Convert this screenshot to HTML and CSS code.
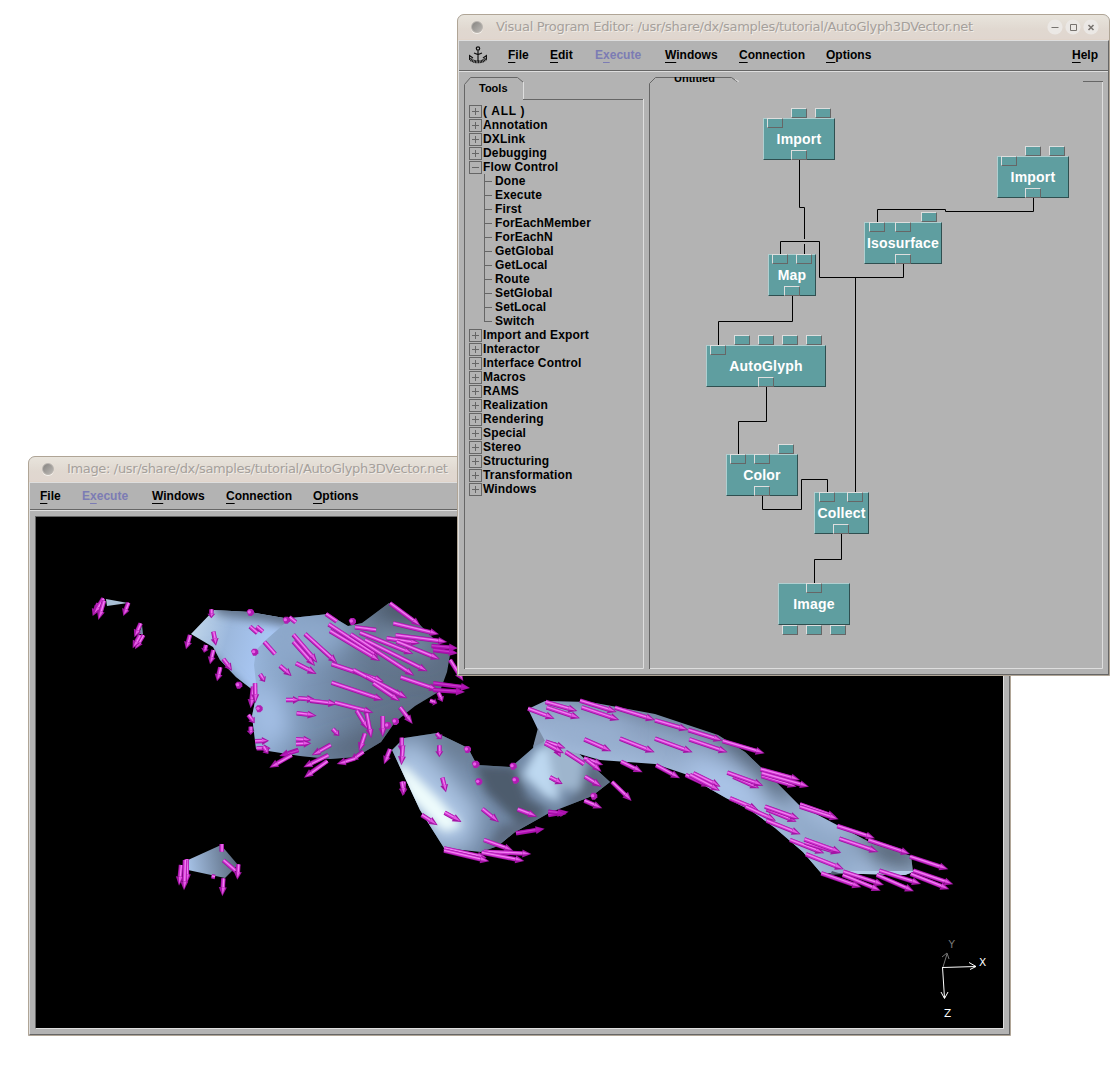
FILE: index.html
```html
<!DOCTYPE html>
<html lang="en">
<head>
<meta charset="utf-8">
<title>Visual Program Editor</title>
<link rel="stylesheet" href="styles.css">
</head>
<body>
<main class="desktop">

<section class="window window-image">
  <header class="titlebar"><i class="knob"></i><span class="title title-image">Image: /usr/share/dx/samples/tutorial/AutoGlyph3DVector.net</span></header>
  <div class="body">
    <nav class="menubar menubar-image">
      <span class="m-file"><u>F</u>ile</span><span class="m-exec off">E<u>x</u>ecute</span><span class="m-win"><u>W</u>indows</span><span class="m-conn"><u>C</u>onnection</span><span class="m-opt"><u>O</u>ptions</span>
    </nav>
    <div class="viewport">
      <svg class="scene" viewBox="36 517 967 511" width="967" height="511">
        <defs>
          <filter id="soft" x="-50%" y="-50%" width="200%" height="200%"><feGaussianBlur stdDeviation="11"/></filter>
          <filter id="soft2" x="-50%" y="-50%" width="200%" height="200%"><feGaussianBlur stdDeviation="5"/></filter>
          <linearGradient id="gTube" gradientUnits="userSpaceOnUse" x1="690" y1="705" x2="670" y2="775"><stop offset="0" stop-color="#5d6e84"/><stop offset=".5" stop-color="#8aa0bf"/><stop offset="1" stop-color="#a0b8d8"/></linearGradient>
          <linearGradient id="gMain" gradientUnits="userSpaceOnUse" x1="255" y1="670" x2="450" y2="690"><stop offset="0" stop-color="#96b3d8"/><stop offset=".3" stop-color="#7a93b3"/><stop offset=".6" stop-color="#64778f"/><stop offset="1" stop-color="#5d6d82"/></linearGradient>
          <linearGradient id="gLeft" gradientUnits="userSpaceOnUse" x1="191" y1="630" x2="262" y2="650"><stop offset="0" stop-color="#c0d6ea"/><stop offset=".5" stop-color="#9cb8dd"/><stop offset="1" stop-color="#a8c6f2"/></linearGradient>
          <linearGradient id="gIsle" gradientUnits="userSpaceOnUse" x1="188" y1="866" x2="238" y2="858"><stop offset="0" stop-color="#a6c2e6"/><stop offset="1" stop-color="#566579"/></linearGradient>
          <clipPath id="cLeft"><path d="M191 634L214 610L250 612L290 619L270 692L254 691L236 677L220 660L213 647Z"/></clipPath>
          <clipPath id="cMain"><path d="M254 665L256 650L267 639L291 618L328 614L348 626L362 623L389 603L412 617L450 655L447 672L440 691L415 706L395 722L381 742L356 757L330 759L300 756L256 749L252 716L257 692Z"/></clipPath>
          <clipPath id="cFront"><path d="M392 750L404 738L437 733L468 748L477 765L511 767L533 748L539 728L545 740L575 750L610 782L592 796L549 813L515 832L498 846L481 852L444 848L420 810Z"/></clipPath>
          <clipPath id="cTube"><path d="M528 709L545 701L590 702L655 714L718 735L745 752L772 778L799 805L837 825L873 844L911 856L913 872L905 875L821 873L803 852L775 828L750 810L726 798L712 790L685 774L655 764L600 760L545 744Z"/></clipPath>
        </defs>
        <g clip-path="url(#cLeft)"><path fill="url(#gLeft)" d="M180 600H300V700H180Z"/><g filter="url(#soft2)"><path fill="#65778f" d="M210 598L300 603L295 628L258 621L218 615Z"/><path fill="#67809c" d="M205 645L258 702L245 705L203 665Z"/></g></g>
        <g clip-path="url(#cMain)"><path fill="url(#gMain)" d="M245 595H460V770H245Z"/><g filter="url(#soft)"><path fill="#8da8cb" d="M270 620L330 610L355 635L330 655L280 665Z"/><path fill="#7a90ab" d="M375 630L430 635L430 655L380 650Z"/><path fill="#485666" d="M370 600L400 595L440 630L390 625Z"/><path fill="#a4c0e6" d="M250 690L275 690L290 730L260 750Z"/><path fill="#526174" d="M280 765L390 750L430 710L380 730L330 745Z"/></g></g>
        <g clip-path="url(#cFront)"><path fill="#7188a5" d="M380 720H620V860H380Z"/><g filter="url(#soft)"><path fill="#aac3e2" d="M385 750L415 740L450 775L480 810L470 850L430 850Z"/><path fill="#68798e" d="M415 725L470 735L480 765L450 752Z"/></g><g filter="url(#soft2)"><path fill="#eefcfc" d="M394 762L408 768L440 800L462 826L444 832L410 798Z"/><path fill="#4d5b6d" d="M474 764L515 766L527 798L550 812L520 825L486 792Z"/><path fill="#bdd8f0" d="M537 748L552 745L560 802L545 797L522 775Z"/><path fill="#9eb5cd" d="M545 735L585 755L580 790L555 790Z"/><path fill="#5b6b7e" d="M560 812L600 797L615 780L590 762L580 790Z"/><path fill="#5b6b80" d="M482 858L520 836L548 818L500 825Z"/></g></g>
        <g clip-path="url(#cTube)"><path fill="url(#gTube)" d="M520 690H920V880H520Z"/><g filter="url(#soft)"><path fill="#97afcf" d="M545 718L625 722L620 752L560 745Z"/><path fill="#aac4e8" d="M690 755L750 778L765 815L735 808L690 785Z"/><path fill="#8ca5c4" d="M760 780L800 815L860 850L850 875L810 870Z"/><path fill="#a5bfe0" d="M770 815L830 872L800 880Z"/><path fill="#455263" d="M705 722L750 742L800 795L780 800L745 765Z"/><path fill="#485666" d="M845 825L920 850L920 870L880 864Z"/></g><path fill="#b3cbe8" d="M850 871H915V875H850Z"/></g>
        <path fill="#7d8fa8" d="M538 728L533 747L545 741Z"/>
        <path fill="#4f5f70" d="M832 871L842 874L830 875Z"/>
        <path fill="url(#gIsle)" d="M188 860L221 845L238 865L225 878L188 870Z"/>
        <path fill="#a9c0d6" d="M106 599L128 603L107 606Z"/>
        <path fill="#7890a8" d="M142 625L143 634L139 634Z"/>
        <g id="arrows"></g>
        <g class="axes">
          <path class="dim" d="M943 967L947 954M942 957L947 953L949 959"/>
          <path d="M942.500 967.500L976 966.500M969 962.500L976 966.500L970 969.500M942.500 967L944.500 998M941 992L944.500 998.500L948 992"/>
          <text class="dim" x="948.500" y="948">Y</text><text x="979" y="966">X</text><text x="944" y="1017">Z</text>
        </g>
      </svg>
    </div>
  </div>
</section>

<section class="window window-editor">
  <header class="titlebar"><i class="knob"></i><span class="title title-editor">Visual Program Editor: /usr/share/dx/samples/tutorial/AutoGlyph3DVector.net</span>
    <span class="controls">
      <svg viewBox="0 0 16 16"><circle cx="8" cy="8" r="7.600"/><path d="M4.500 8.500H11.500"/></svg>
      <svg viewBox="0 0 16 16"><circle cx="8" cy="8" r="7.600"/><path d="M5.500 5.500H11.500V11.500H5.500Z"/></svg>
      <svg viewBox="0 0 16 16"><circle cx="8" cy="8" r="7.600"/><path class="thick" d="M5.500 6L10.500 11M10.500 6L5.500 11"/></svg>
    </span>
  </header>
  <div class="body">
    <nav class="menubar menubar-editor">
      <svg class="anchor" viewBox="0 0 18 18"><circle cx="9" cy="2.500" r="1.700"/><path d="M9 4.500V15M5 7L9 8.500L13 7"/><path d="M1 12.500C4 17 14 17 17 12.500" class="fluke"/><path d="M.500 13.500V9.500L4 12M17.500 13.500V9.500L14 12"/></svg>
      <span class="m-file"><u>F</u>ile</span><span class="m-edit"><u>E</u>dit</span><span class="m-exec off">E<u>x</u>ecute</span><span class="m-win"><u>W</u>indows</span><span class="m-conn"><u>C</u>onnection</span><span class="m-opt"><u>O</u>ptions</span><span class="m-help"><u>H</u>elp</span>
    </nav>
    <div class="panes">
      <aside class="tools">
        <svg class="frame" viewBox="0 0 180 592"><path class="dk" d="M.500 592V7.500L6.500 .500H53.500L59.500 5.500M59 22.500H179"/><path class="lt" d="M59.500 5V22M179.500 22V591.500H1"/></svg>
        <h2>Tools</h2>
        <ul class="tree">
          <li class="all">( ALL )</li><li>Annotation</li><li>DXLink</li><li>Debugging</li>
          <li class="open">Flow Control
            <ul><li>Done</li><li>Execute</li><li>First</li><li>ForEachMember</li><li>ForEachN</li><li>GetGlobal</li><li>GetLocal</li><li>Route</li><li>SetGlobal</li><li>SetLocal</li><li>Switch</li></ul>
          </li>
          <li>Import and Export</li><li>Interactor</li><li>Interface Control</li><li>Macros</li><li>RAMS</li><li>Realization</li><li>Rendering</li><li>Special</li><li>Stereo</li><li>Structuring</li><li>Transformation</li><li>Windows</li>
        </ul>
      </aside>
      <div class="program">
        <svg class="frame" viewBox="649 77 454 592">
          <path class="dk" d="M649.500 669V83.500L655.500 77.500H731.500L737 81.500M1083 81.500H1103"/><path class="lt" d="M735 79.500L739 81.500M1102.500 82V668.500H650"/>
          <path class="wire" d="M799.500 160V207.500H804.500V239M804.500 244V254M903.500 264V277.500H819.500V241.500H780.500V254M855.500 277V492M1033.500 198V211.500H945.500V209.500H877.500V222M792.500 296V321.500H718.500V345M766.500 387V421.500H738.500V454M762.500 496V509.500H801.500V479.500H827.500V492M841.500 534V559.500H814.500V583"/>
        </svg>
        <div class="pagetab"><span>Untitled</span></div>
        <div class="node n-import1"><div class="ports in"><i></i><i class="out"></i><i class="out"></i></div>Import<div class="ports foot"><i></i></div></div>
        <div class="node n-import2"><div class="ports in"><i></i><i class="out"></i><i class="out"></i></div>Import<div class="ports foot"><i></i></div></div>
        <div class="node n-iso"><div class="ports in"><i></i><i></i><i class="out"></i></div>Isosurface<div class="ports foot"><i></i></div></div>
        <div class="node n-map"><div class="ports in"><i></i><i></i></div>Map<div class="ports foot"><i></i></div></div>
        <div class="node n-glyph"><div class="ports in"><i></i><i class="out"></i><i class="out"></i><i class="out"></i><i class="out"></i></div>AutoGlyph<div class="ports foot"><i></i></div></div>
        <div class="node n-color"><div class="ports in"><i></i><i></i><i class="out"></i></div>Color<div class="ports foot"><i></i></div></div>
        <div class="node n-collect"><div class="ports in"><i></i><i></i></div>Collect<div class="ports foot"><i></i></div></div>
        <div class="node n-image"><div class="ports in"><i></i></div>Image<div class="ports under"><i></i><i></i><i></i></div></div>
      </div>
    </div>
  </div>
</section>
</main>
<script src="arrows.js"></script>
</body>
</html>
```
FILE: styles.css
```css
* { box-sizing: border-box; }
body { margin: 0; background: #fff; font-family: "Liberation Sans", Arial, sans-serif; }
.desktop { position: relative; width: 1114px; height: 1074px; overflow: hidden; }

/* window frames */
.window { position: absolute; display: flex; flex-direction: column; border: 1px solid #b0a596; border-radius: 7px 7px 0 0; background: #b3b3b3; overflow: hidden; }
.window-editor { left: 457px; top: 14px; width: 653px; height: 662px; }
.window-image { left: 28px; top: 456px; width: 983px; height: 580px; }
.titlebar { flex: none; height: 25px; display: flex; align-items: center; padding: 0 10px 0 13px; background: linear-gradient(#e8e4dc, #e0d8d0 60%, #e0d6cf); border-bottom: 1px solid #e0d4ca; }
.knob { width: 12px; height: 12px; border-radius: 50%; background: linear-gradient(135deg, #858380, #bcb9b5); border: 1px solid #b9b5b0; box-shadow: 0 1px #f4f1ec; }
.title { margin-left: 13px; font: 13px/24px "DejaVu Sans", sans-serif; color: #a5a09b; text-shadow: 1px 1px #f0ece7; white-space: nowrap; }
.title-editor { letter-spacing: -.31px; }
.title-image { letter-spacing: -.34px; }
.controls { display: flex; gap: 2px; margin-left: auto; }
.controls svg { width: 16px; height: 16px; fill: #ebe8e5; }
.controls path { fill: none; stroke: #77736f; }
.controls .thick { stroke-width: 1.600; }
.body { flex: 1; display: flex; flex-direction: column; min-height: 0; border: 1px solid; border-color: #dedede #666 #666 #dedede; }

/* menus */
.menubar { flex: none; display: flex; align-items: center; font-weight: 700; font-size: 12px; color: #000; border-bottom: 1px solid #666; box-shadow: 0 1px #dedede; }
.menubar-editor { height: 30px; padding: 0 0 1px 10px; }
.menubar-image { height: 27px; padding-left: 10px; }
.menubar span { flex: none; white-space: nowrap; }
.menubar u { text-decoration-thickness: 1px; text-underline-offset: 3px; text-decoration-skip-ink: none; }
.anchor { width: 18px; height: 18px; margin-right: 21px; fill: none; stroke: #111; stroke-width: 1.200; }
.anchor .fluke { stroke-width: 3px; stroke-dasharray: 1 .5; }
.m-file { width: 42px; }
.m-edit { width: 45px; }
.m-exec { width: 70px; }
.m-win { width: 74px; }
.m-conn { width: 87px; }
.m-help { margin: 0 10px 0 auto; }
.off { color: #7c7cb4; }

/* panes */
.panes { flex: 1; display: flex; gap: 5px; padding: 6px 5px 5px; min-height: 0; }
.tools { position: relative; width: 180px; }
.program { position: relative; width: 454px; }
.frame { position: absolute; inset: 0; width: 100%; height: 100%; fill: none; }
.dk { stroke: #666; }
.lt { stroke: #dedede; }
.wire { stroke: #000; }
.tools h2 { margin: 0; padding: 5px 0 0 15px; font-size: 11px; line-height: 13px; height: 27px; }
.tree, .tree ul { margin: 0; padding: 0; list-style: none; font-weight: 700; font-size: 12px; line-height: 14px; letter-spacing: .15px; }
.tree { padding-left: 19px; }
.tree > .all { letter-spacing: .7px; }
.tree > li { position: relative; }
.tree > li::before { content: ""; position: absolute; left: -14px; top: 1px; width: 11px; height: 11px; border: 1px solid #666;
  background: linear-gradient(#666, #666) center / 7px 1px no-repeat, linear-gradient(#666, #666) center / 1px 7px no-repeat; }
.tree > .open::before { background: linear-gradient(#666, #666) center / 7px 1px no-repeat; }
.tree ul { padding-left: 12px; }
.tree ul li { position: relative; }
.tree ul li::before { content: ""; position: absolute; left: -11px; top: 0; width: 1px; height: 14px; background: #666; }
.tree ul li:last-child::before { height: 8px; }
.tree ul li::after { content: ""; position: absolute; left: -11px; top: 7px; width: 8px; height: 1px; background: #666; }
.pagetab { position: relative; margin-left: 25px; height: 5px; display: flex; align-items: flex-end; overflow: hidden; font-size: 11px; font-weight: 700; line-height: 13px; }
.pagetab span { margin-bottom: -3px; }

/* program graph */
.node { position: absolute; height: 42px; width: 72px; background: #5f9ea0; border: 1px solid; border-color: #afcfd0 #2f4f50 #2f4f50 #afcfd0; color: #fff; font-weight: 700; font-size: 14px; line-height: 40px; letter-spacing: .2px; text-align: center; white-space: nowrap; }
.ports { position: absolute; left: -1px; right: -1px; display: flex; justify-content: center; gap: 8px; }
.ports i { width: 16px; height: 10px; background: #5f9ea0; border: 1px solid; border-color: #dedede #666 #666 #dedede; }
.in { top: -1px; }
.in .out { margin-top: -10px; }
.foot { bottom: -1px; }
.under { top: 41px; }
.n-import1 { left: 114px; top: 41px; }
.n-import2 { left: 348px; top: 79px; }
.n-iso { left: 215px; top: 145px; width: 78px; }
.n-iso .in { gap: 10px; }
.n-map { left: 119px; top: 177px; width: 48px; }
.n-glyph { left: 57px; top: 268px; width: 120px; }
.n-color { left: 77px; top: 377px; }
.n-collect { left: 165px; top: 415px; width: 55px; }
.n-collect .in { gap: 12px; right: 0; }
.n-collect .foot { right: 0; }
.n-image { left: 129px; top: 506px; }

/* rendered image */
.viewport { margin: 6px 5px 5px; border: 1px solid; border-color: #666 #dedede #dedede #666; background: #000; }
.scene { display: block; }
.s0 { stroke: #9c109e; stroke-width: 13.500; }
.s1 { stroke: #cc30ce; stroke-width: 10; }
.s2 { stroke: #f282f2; stroke-width: 3.800; }
.h0 { fill: #a414a6; }
.h1 { fill: #e45ae4; }
.dark .s1 { stroke: #b010b4; }
.dark .h1 { fill: #b814bc; }
.dark .s2 { stroke: #c83cca; }
.b0 { fill: #b01cb2; }
.b1 { fill: #e85ee8; }
.axes path { fill: none; stroke: #fff; }
.axes text { fill: #fff; font: 10.500px "DejaVu Sans", sans-serif; }
.axes path.dim { stroke: #777; }
.axes text.dim { fill: #777; }
```
FILE: arrows.js
```js
// Vector glyphs, grouped in patches. Coordinates inside a patch are in thirds
// of a pixel from its origin: [tail x, tail y, tip x, tip y], or [x, y] for a
// glyph that points at the viewer. Optional flags: headless, dark.
const patches = [
  { at: [80, 580], v: [[55,70,38,108],[70,55,40,104],[72,62,55,120],[145,68,130,108],[182,130,163,172],[190,165,165,208],[180,165,158,205],[330,165,318,208],[378,195,372,218],[394,88,394,115],[400,155,408,197],[400,210,390,253],[430,237,456,272],[421,262,411,304],[475,315],[510,97],[510,140,532,159,1],[530,140,548,155,1],[553,186,585,222,1],[523,216],[540,283,555,306],[519,320,512,385],[525,310,526,370],[536,386],[505,405,524,430],[512,440,512,465],[525,484,567,482],[530,505,572,505],[550,500,565,522]] },
  { at: [240, 580], v: [[258,102,290,124,1],[336,124],[345,142,408,150,1],[148,112,167,127,1],[138,120],[450,70,542,138],[440,175,540,190],[460,130,597,163],[467,166,622,186],[575,198,654,205,0,1],[580,210,654,220,0,1],[266,133,415,230],[270,153,420,243],[470,185,600,238],[360,158,520,222],[375,180,563,274],[332,163,523,287],[160,164,232,248],[160,185,225,258],[195,162,292,250],[168,250,230,282],[120,258,155,288],[275,252,432,305],[340,270,490,350],[380,290,502,355],[400,310,480,364],[275,308,430,360],[482,292,595,330],[580,310,690,324,0,1],[580,330,675,336,0,1],[630,240,670,303],[595,338,608,366],[570,362,592,370],[480,382,518,432],[465,424],[442,436],[138,360,180,360],[175,355,228,359],[210,362,292,372],[285,368,400,398],[170,400,230,407],[278,447,298,468],[350,392,385,450],[380,400,394,475],[428,408,428,472],[375,460,357,515],[370,515,330,543],[345,535,290,552],[272,494,215,526],[265,525,190,562],[262,543,192,593],[168,478,214,480],[168,492,214,490],[175,510,118,528,0,1],[155,525,88,563],[450,507,432,553],[485,473,485,520],[488,498,484,556],[590,460,605,478],[598,496,598,532],[681,508],[706,552]] },
  { at: [380, 680], v: [[72,305,68,348],[65,305,72,345],[187,293,198,337],[125,405,173,436],[194,398,245,426],[307,387,357,427],[413,388,472,410],[505,405,566,395,0,1],[505,395,560,402,0,1],[408,460,494,446,0,1],[312,480,400,512],[312,515,454,522],[305,518,433,543],[192,505,320,533],[192,512,328,544],[295,305],[286,253],[398,258],[405,300],[444,86,524,116],[497,66,592,93],[500,82,600,115],[600,62,710,96],[605,82,718,120],[520,190,542,232],[497,185,557,205],[495,190,552,220],[557,216,612,252,1],[612,235,670,255],[620,240,665,275],[613,178,694,214],[510,292,548,312],[615,290,665,320],[696,306,755,363],[640,348],[613,362,667,385]] },
  { at: [620, 680], v: [[-15,83,105,120],[0,176,104,217],[3,245,68,277],[105,121,205,150],[205,150,308,182],[308,183,434,220],[105,176,218,217],[208,178,323,217],[108,256,180,295],[197,285,272,320],[220,280,302,320],[210,285,300,332],[340,290,418,325],[322,278,430,317],[425,288,530,320],[422,268,540,300],[425,280,567,320],[330,355,415,390],[377,380,468,422],[440,388,530,425],[435,380,538,417],[440,422,542,463],[540,373,650,412],[540,380,656,418],[652,438,765,475],[745,480,870,522],[870,530,985,568],[658,476,775,516],[510,480,613,520],[555,488,660,520],[553,478,664,518],[558,523,672,568],[604,580,724,622],[668,585,782,632],[670,575,792,615],[770,585,882,634],[778,572,903,612],[872,582,988,628],[880,572,1000,613]] },
  { at: [165, 655], v: [[48,630,42,692],[65,612,66,685],[60,615,57,706],[170,567,170,590,1],[175,616,212,648,1],[220,628,217,674],[175,670,172,724],[140,664,150,666,1]] }
];

const ns = "http://www.w3.org/2000/svg";
const root = document.getElementById("arrows");
function add(parent, tag, attrs) {
  const el = document.createElementNS(ns, tag);
  for (const k in attrs) el.setAttribute(k, attrs[k]);
  parent.appendChild(el);
  return el;
}
for (const { at, v } of patches) {
  const g = add(root, "g", { transform: `translate(${at[0]} ${at[1]}) scale(.33333)` });
  for (const [x1, y1, x2, y2, headless, dark] of v) {
    if (x2 === undefined) {
      add(g, "path", { class: "b0", d: `M${x1 - 10} ${y1 - 3}l6 -7h10l6 6v8l-7 7h-9z` });
      add(g, "circle", { class: "b1", cx: x1 - 2, cy: y1 - 1, r: 5 });
      continue;
    }
    const len = Math.hypot(x2 - x1, y2 - y1), ux = (x2 - x1) / len, uy = (y2 - y1) / len;
    const head = headless ? 0 : Math.min(27, len * .5);
    const bx = x2 - ux * head, by = y2 - uy * head;
    const a = add(g, "g", dark ? { class: "dark" } : {});
    for (const s of [0, 1, 2]) {
      const o = -s * .6;
      add(a, "path", { class: "s" + s, d: `M${x1 - uy * o} ${y1 + ux * o}L${bx - uy * o} ${by + ux * o}` });
    }
    if (head) {
      const w = 12;
      add(a, "path", { class: "h0", d: `M${x2} ${y2}L${bx - uy * w} ${by + ux * w}L${bx + uy * w} ${by - ux * w}Z` });
      add(a, "path", { class: "h1", d: `M${x2 - ux * 5} ${y2 - uy * 5}L${bx - uy * 3} ${by + ux * 3}L${bx + uy * 7} ${by - ux * 7}Z` });
    }
  }
}
```
